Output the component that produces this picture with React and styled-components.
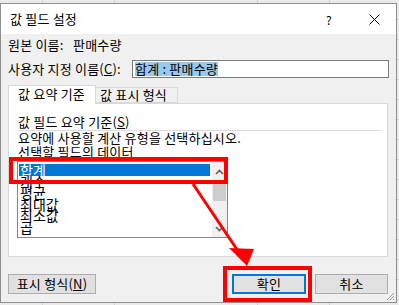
import React from 'react';
import styled, { createGlobalStyle } from 'styled-components';

const FONT = `"Noto Sans CJK KR", "Noto Sans", sans-serif`;

const Global = createGlobalStyle`
  html, body { margin: 0; padding: 0; }
  body {
    width: 399px;
    height: 305px;
    overflow: hidden;
    font-family: ${FONT};
    background-color: #ebebeb;
    background-image:
      linear-gradient(to right, transparent 42px, #cfcfcf 42px, #cfcfcf 43px, transparent 43px),
      linear-gradient(to right, transparent 114px, #cfcfcf 114px, #cfcfcf 115px, transparent 115px),
      linear-gradient(to right, transparent 257px, #cfcfcf 257px, #cfcfcf 258px, transparent 258px),
      linear-gradient(to right, transparent 329px, #cfcfcf 329px, #cfcfcf 330px, transparent 330px),
      repeating-linear-gradient(to bottom, transparent 0px, transparent 19px, #cfcfcf 19px, #cfcfcf 20px);
  }
`;

const Stage = styled.div`
  position: relative;
  width: 399px;
  height: 305px;
  padding-top: 3px;
  box-sizing: border-box;
`;

const Dialog = styled.div`
  position: relative;
  width: 397px;
  height: 300px;
  box-sizing: border-box;
  border: 1px solid #8f8f8f;
  display: flex;
  flex-direction: column;
  background: #f0f0f0;
  color: #000;
  font-size: 13px;
  letter-spacing: 0.2px;
`;

const TitleBar = styled.div`
  height: 30px;
  flex: none;
  background: #fff;
  display: flex;
  align-items: center;
  padding-left: 9px;
`;

const Title = styled.span`
  line-height: 14px;
  flex: 1;
`;

const TitleButton = styled.div`
  width: ${p => p.$w}px;
  margin-right: ${p => p.$mr || 0}px;
  height: 30px;
  display: flex;
  align-items: center;
  justify-content: center;
  font-size: 12px;
`;

const Body = styled.div`
  flex: 1;
  display: flex;
  flex-direction: column;
  padding: 3px 7px 0 7px;
`;

const InfoRow = styled.div`
  height: ${p => p.$h}px;
  margin-top: ${p => p.$mt}px;
  display: flex;
  align-items: center;
  line-height: 16px;
`;

const RowLabel = styled.span`
  width: ${p => p.$w}px;
  flex: none;
  white-space: nowrap;
`;

const U = styled.span`
  text-decoration: underline;
  text-underline-offset: 1px;
`;

const TextBox = styled.div`
  width: 258px;
  height: 18px;
  box-sizing: border-box;
  border: 1px solid #7a7a7a;
  background: #fff;
  display: flex;
  align-items: center;
  padding-left: 2px;
`;

const Selection = styled.span`
  background: #99c9ef;
  line-height: 14px;
  white-space: pre;
`;

const TabBar = styled.div`
  margin-top: 7px;
  height: 18px;
  display: flex;
  align-items: flex-end;
  position: relative;
  z-index: 1;
`;

const Tab = styled.div`
  box-sizing: border-box;
  width: ${p => p.$w}px;
  height: ${p => (p.$active ? 19 : 16)}px;
  margin-bottom: ${p => (p.$active ? -1 : 0)}px;
  background: ${p => (p.$active ? '#fff' : '#f0f0f0')};
  border: 1px solid #d9d9d9;
  border-bottom: ${p => (p.$active ? 'none' : '1px solid #d9d9d9')};
  border-left: ${p => (p.$active ? '1px solid #d9d9d9' : 'none')};
  display: flex;
  align-items: center;
  padding-left: ${p => p.$pl}px;
  padding-bottom: ${p => (p.$active ? 2 : 0)}px;
  line-height: 14px;
  white-space: nowrap;
`;

const Panel = styled.div`
  width: 380px;
  height: 154px;
  box-sizing: border-box;
  background: #fff;
  border: 1px solid #d9d9d9;
  padding: 11px 0 0 9px;
  display: flex;
  flex-direction: column;
  align-items: flex-start;
`;

const PanelText = styled.div`
  line-height: 14px;
  white-space: nowrap;
`;

const Separator = styled.div`
  width: 363px;
  height: 1px;
  margin-top: 1px;
  background: #dcdcdc;
`;

const ListBox = styled.div`
  margin-top: 2px;
  margin-left: -1px;
  width: 211px;
  height: 77px;
  box-sizing: border-box;
  border: 1px solid #828790;
  background: #fff;
  display: flex;
  overflow: hidden;
`;

const Items = styled.div`
  flex: 1;
  padding: 2px 1px 0 1px;
  display: flex;
  flex-direction: column;
`;

const Item = styled.div`
  height: ${p => (p.$first ? 12 : 11.4)}px;
  flex: none;
  font-size: 14px;
  letter-spacing: 0;
  line-height: ${p => (p.$first ? 12 : 11.4)}px;
  padding-left: 1px;
  background: ${p => (p.$selected ? '#0078d7' : 'transparent')};
  color: ${p => (p.$selected ? '#fff' : '#000')};
  white-space: nowrap;
`;

const ScrollBar = styled.div`
  width: 15px;
  margin-left: 1px;
  flex: none;
  background: #f0f0f0;
  display: flex;
  flex-direction: column;
`;

const ArrowCell = styled.div`
  height: ${p => p.$h}px;
  flex: none;
  display: flex;
  align-items: center;
  justify-content: center;
`;

const Thumb = styled.div`
  height: 19px;
  margin: 1px 1px 0 1px;
  background: #cdcdcd;
  flex: none;
`;

const Spacer = styled.div`
  flex: 1;
`;

const ButtonRow = styled.div`
  margin-top: 17px;
  display: flex;
  align-items: center;
`;

const Button = styled.div`
  width: ${p => p.$w}px;
  height: 20px;
  box-sizing: border-box;
  margin-left: ${p => p.$ml || 0}px;
  background: #e1e1e1;
  border: ${p => (p.$default ? '2px solid #0078d7' : '1px solid #adadad')};
  display: flex;
  align-items: center;
  justify-content: center;
  line-height: 14px;
  white-space: nowrap;
`;

const Grip = styled.svg`
  position: absolute;
  right: 1px;
  bottom: 1px;
`;

const RedBox = styled.div`
  position: absolute;
  left: ${p => p.$x}px;
  top: ${p => p.$y}px;
  width: ${p => p.$w}px;
  height: ${p => p.$h}px;
  box-sizing: border-box;
  border: 4px solid #ff0000;
  pointer-events: none;
`;

const ArrowLayer = styled.svg`
  position: absolute;
  left: 0;
  top: 0;
  pointer-events: none;
`;

const Chevron = ({ down }) => (
  <svg width="9" height="6" viewBox="0 0 9 6">
    <path
      d={down ? 'M1 1 L4.5 4.5 L8 1' : 'M1 5 L4.5 1.5 L8 5'}
      fill="none"
      stroke="#606060"
      strokeWidth="1.6"
    />
  </svg>
);

const items = ['합계', '개수', '평균', '최대값', '최소값', '곱'];

export default function App() {
  return (
    <>
      <Global />
      <Stage>
        <Dialog>
          <TitleBar>
            <Title>값 필드 설정</Title>
            <TitleButton $w={20} $mr={13}>?</TitleButton>
            <TitleButton $w={44}>
              <svg width="11" height="11" viewBox="0 0 11 11">
                <path d="M0.5 0.5 L10.5 10.5 M10.5 0.5 L0.5 10.5" stroke="#000" strokeWidth="1" />
              </svg>
            </TitleButton>
          </TitleBar>
          <Body>
            <InfoRow $h={16} $mt={0}>
              <RowLabel $w={65}>원본 이름:</RowLabel>
              <span>판매수량</span>
            </InfoRow>
            <InfoRow $h={18} $mt={7}>
              <RowLabel $w={124}>
                사용자 지정 이름(<U>C</U>):
              </RowLabel>
              <TextBox>
                <Selection>합계 : 판매수량</Selection>
              </TextBox>
            </InfoRow>
            <TabBar>
              <Tab $active $w={88} $pl={9}>값 요약 기준</Tab>
              <Tab $w={82} $pl={4}>값 표시 형식</Tab>
            </TabBar>
            <Panel>
              <PanelText>
                값 필드 요약 기준(<U>S</U>)
              </PanelText>
              <Separator />
              <PanelText>요약에 사용할 계산 유형을 선택하십시오.</PanelText>
              <PanelText>선택할 필드의 데이터</PanelText>
              <ListBox>
                <Items>
                  {items.map((t, i) => (
                    <Item key={t} $selected={i === 0} $first={i === 0}>
                      {t}
                    </Item>
                  ))}
                </Items>
                <ScrollBar>
                  <ArrowCell $h={19}>
                    <Chevron />
                  </ArrowCell>
                  <Thumb />
                  <Spacer />
                  <ArrowCell $h={17}>
                    <Chevron down />
                  </ArrowCell>
                </ScrollBar>
              </ListBox>
            </Panel>
            <ButtonRow>
              <Button $w={88}>
                표시 형식(<U>N</U>)
              </Button>
              <Button $w={74} $ml={136} $default>
                확인
              </Button>
              <Button $w={73} $ml={9}>
                취소
              </Button>
            </ButtonRow>
          </Body>
          <Grip width="9" height="9" viewBox="0 0 9 9">
            <path d="M8 1 L1 8 M8 4 L4 8 M8 7 L7 8" stroke="#9a9a9a" strokeWidth="1" />
          </Grip>
        </Dialog>
        <RedBox $x={9} $y={157} $w={219} $h={27} />
        <RedBox $x={223} $y={266} $w={89} $h={36} />
        <ArrowLayer width="399" height="305" viewBox="0 0 399 305">
          <line x1="193" y1="184" x2="240" y2="254" stroke="#ff0000" strokeWidth="3" />
          <polygon points="229,248 254,249 247,266" fill="#ff0000" />
        </ArrowLayer>
      </Stage>
    </>
  );
}
